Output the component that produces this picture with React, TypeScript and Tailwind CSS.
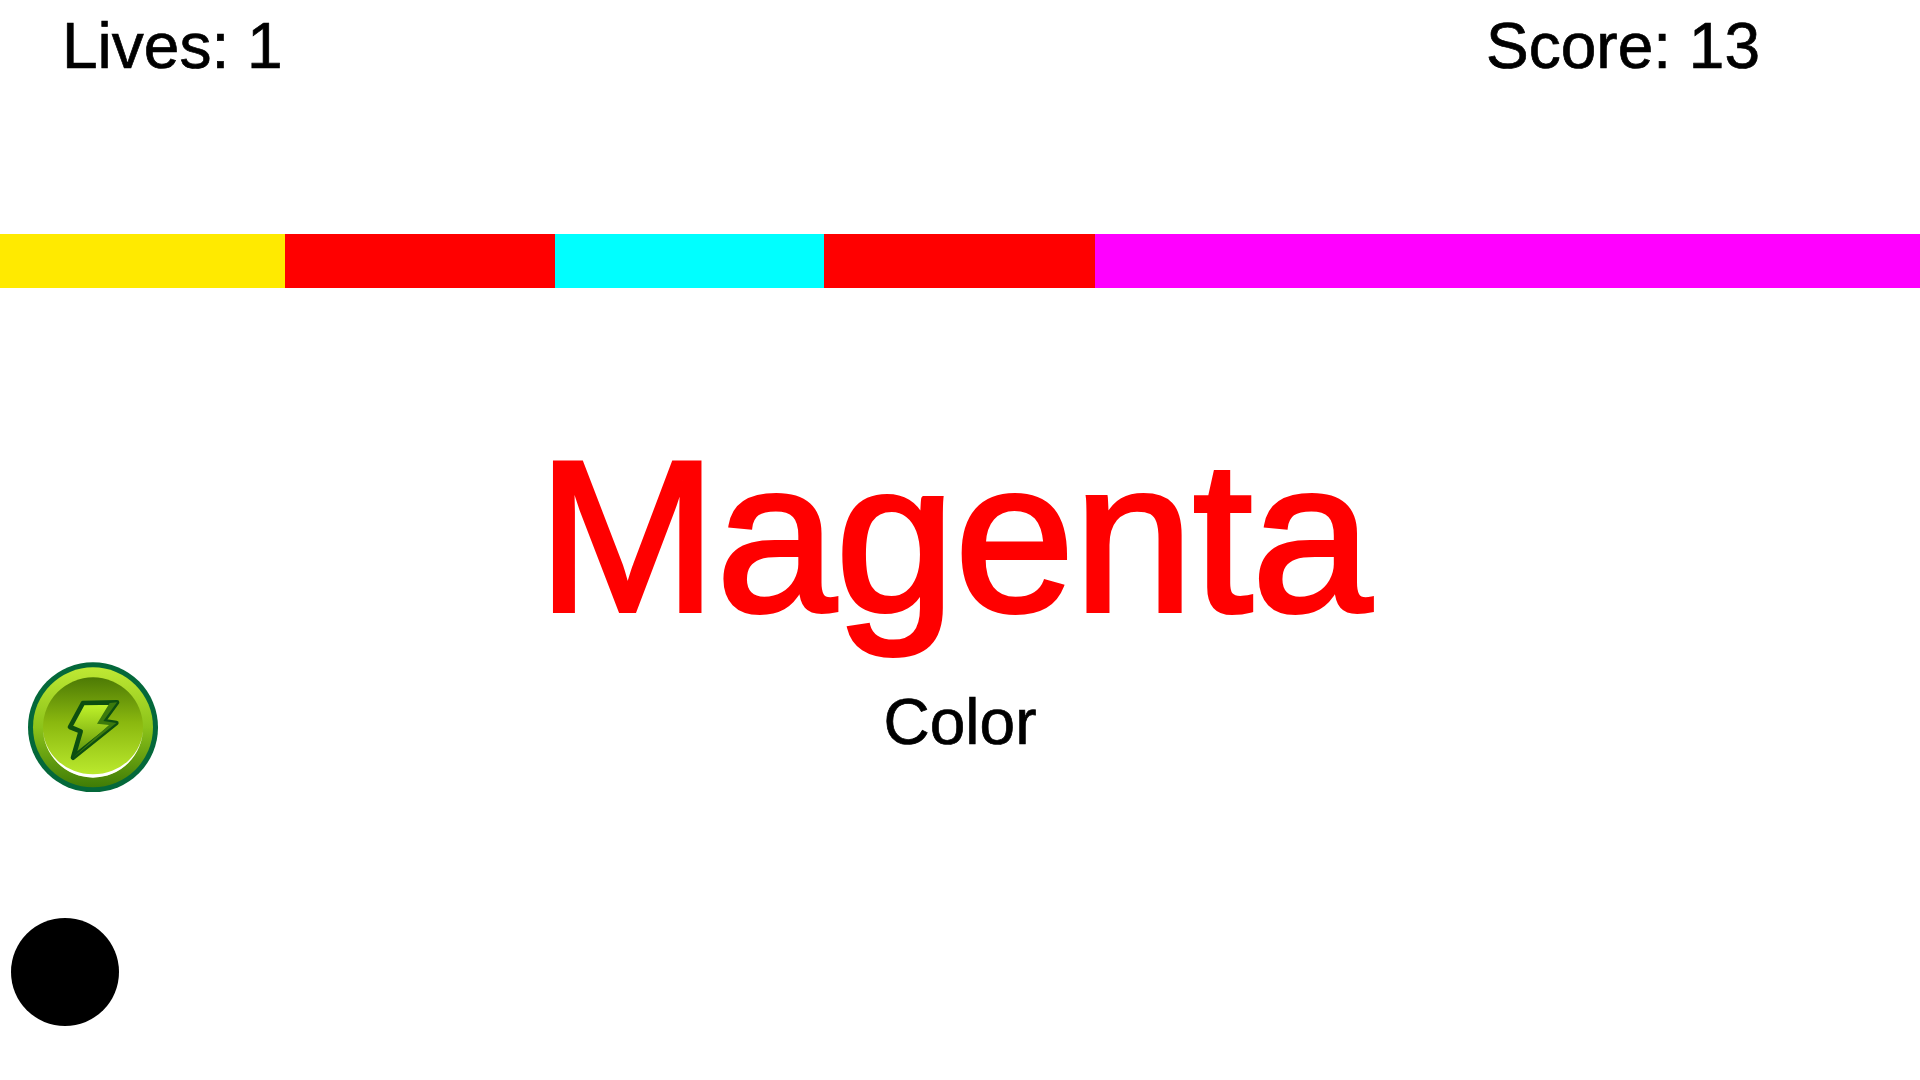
import React from 'react';

const segments = [
  { id: 'yellow', className: 'w-[285px] bg-[#ffea00]' },
  { id: 'red-1', className: 'w-[270px] bg-[#ff0000]' },
  { id: 'cyan', className: 'w-[269px] bg-[#00ffff]' },
  { id: 'red-2', className: 'w-[271px] bg-[#ff0000]' },
  { id: 'magenta', className: 'flex-1 bg-[#ff00ff]' },
];

function PowerCoin() {
  return (
    <svg viewBox="55 35 390 390" className="block h-[130px] w-[130px]">
      <defs>
        <linearGradient id="ring" x1="0" y1="0" x2="0" y2="1">
          <stop offset="0" stopColor="#bfe934" />
          <stop offset="0.5" stopColor="#8cc31a" />
          <stop offset="1" stopColor="#3f7c06" />
        </linearGradient>
        <linearGradient id="face" x1="0" y1="0" x2="0" y2="1">
          <stop offset="0" stopColor="#4d7a05" />
          <stop offset="0.45" stopColor="#8ab80f" />
          <stop offset="1" stopColor="#bdec2f" />
        </linearGradient>
        <linearGradient id="bolt" x1="0" y1="0" x2="0" y2="1">
          <stop offset="0" stopColor="#c4f72c" />
          <stop offset="0.6" stopColor="#86b815" />
          <stop offset="1" stopColor="#4d8a0c" />
        </linearGradient>
      </defs>
      <circle cx="250" cy="231" r="195" fill="#04683a" />
      <circle cx="250" cy="231" r="180" fill="url(#ring)" />
      <circle cx="250" cy="231" r="150" fill="url(#face)" />
      <path d="M100 232 A150 150 0 0 0 400 232 A150 140 0 0 1 100 232 Z" fill="#ffffff" />
      <path
        d="M220 158 L322 156 L281 212 L320 218 L190 322 L213 243 L181 230 Z"
        fill="url(#bolt)"
        stroke="#0d4f10"
        strokeWidth="14"
        strokeLinejoin="round"
      />
      <path d="M322 156 L300 158 L262 220 L298 224 L190 322 L320 218 L281 212 Z" fill="#3c7a0c" />
    </svg>
  );
}

export default function App() {
  return (
    <div className="flex h-[1080px] w-[1920px] flex-col overflow-hidden bg-white font-['Liberation_Sans',Arial,sans-serif] text-black">
      <div className="flex h-[234px] items-start justify-between pl-[62px] pr-[160px] pt-[9px] text-[64px] leading-[74px] [-webkit-text-stroke:0.7px_#000]">
        <span>Lives: 1</span>
        <span>Score: 13</span>
      </div>

      <div className="flex h-[54px]">
        {segments.map(s => (
          <div key={s.id} className={s.className} />
        ))}
      </div>

      <div className="grid flex-1 grid-cols-[1fr_auto_1fr]">
        <div className="flex flex-col items-start">
          <div className="ml-[28px] mt-[374px]">
            <PowerCoin />
          </div>
          <div className="ml-[11px] mt-[126px] h-[108px] w-[108px] rounded-full bg-black" />
        </div>
        <div className="flex flex-col items-center pt-[126px]">
          <div className="mr-[12px] text-[216px] leading-[245px] tracking-[-1px] text-[#ff0000] [-webkit-text-stroke:4px_#ff0000]">
            Magenta
          </div>
          <div className="mt-[26px] text-[64px] leading-[74px] [-webkit-text-stroke:0.7px_#000]">Color</div>
        </div>
        <div />
      </div>
    </div>
  );
}
